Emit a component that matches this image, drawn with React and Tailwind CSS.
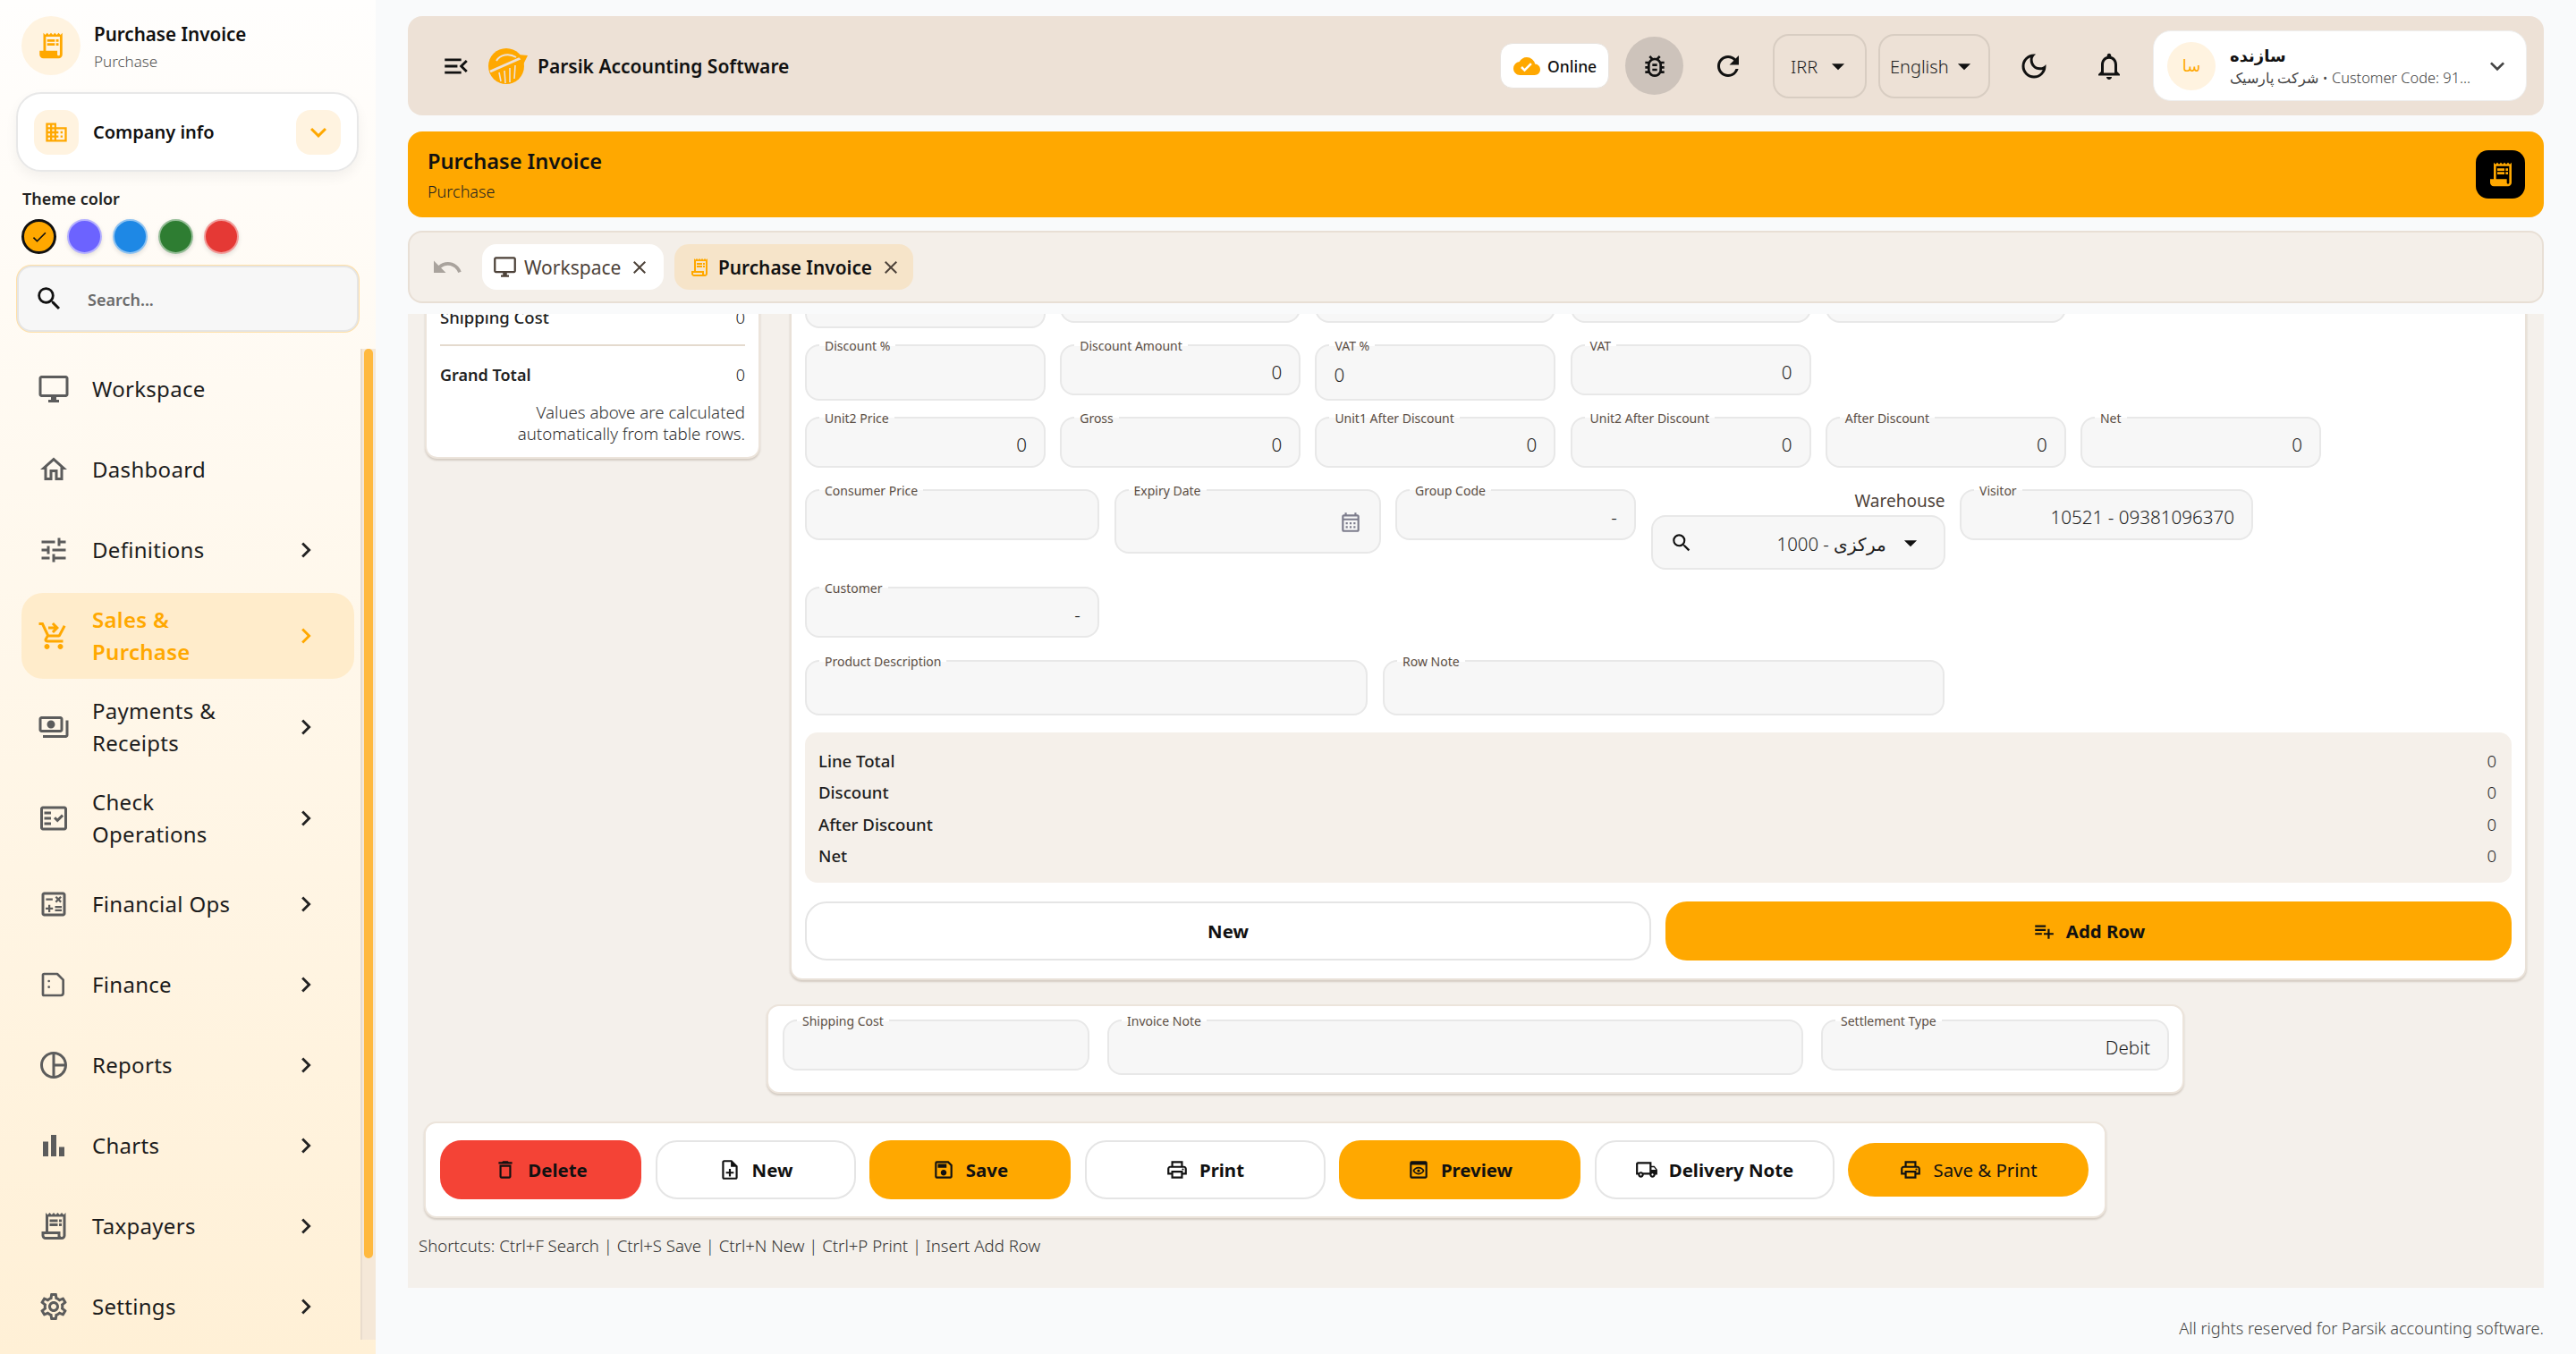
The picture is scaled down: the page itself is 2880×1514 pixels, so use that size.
import React from "react";
import {
  MdReceiptLong, MdBusiness, MdKeyboardArrowDown, MdCheck, MdSearch, MdOutlineDesktopWindows, MdOutlineHome,
  MdOutlineTune, MdOutlineShoppingCartCheckout, MdOutlinePayments, MdOutlineFactCheck, MdOutlineCalculate,
  MdOutlinePieChart, MdBarChart, MdOutlineReceiptLong, MdOutlineSettings, MdChevronRight, MdMenuOpen,
  MdCloudDone, MdOutlineBugReport, MdRefresh, MdOutlineDarkMode, MdOutlineNotifications, MdArrowDropDown,
  MdUndo, MdClose, MdOutlineCalendarMonth, MdOutlineDelete, MdOutlineNoteAdd, MdOutlineSave, MdOutlinePrint,
  MdOutlinePreview, MdOutlineLocalShipping, MdPlaylistAdd,
} from "react-icons/md";

const FinanceIcon = (p) => (
  <svg viewBox="0 0 24 24" fill="none" stroke="currentColor" strokeWidth="2" {...p}>
    <path d="M4 3h11l5 5v11a2 2 0 0 1-2 2H4a1 1 0 0 1-1-1V4a1 1 0 0 1 1-1z" strokeLinejoin="round" />
    <circle cx="8" cy="9" r="1" fill="currentColor" stroke="none" />
    <circle cx="8" cy="14" r="1" fill="currentColor" stroke="none" />
  </svg>
);

const Logo = () => (
  <svg viewBox="0 0 44 42" className="w-[44px] h-[42px] shrink-0">
    <circle cx="20" cy="21" r="20" fill="#ffa800" />
    <path d="M9 15C13 8 23 6 31 11" stroke="#ede1d6" strokeWidth="2" fill="none" />
    <path d="M2 27L36 12" stroke="#ede1d6" strokeWidth="3" fill="none" />
    <path d="M33 8l11 1-5 10-2-5-3-3z" fill="#ffa800" />
    <path d="M12 28l2 10M18 26l1 14M24 23l0 16M30 20l-1 15" stroke="#ede1d6" strokeWidth="1.6" />
  </svg>
);

const navItems = [
  { icon: MdOutlineDesktopWindows, label: "Workspace", noArrow: true },
  { icon: MdOutlineHome, label: "Dashboard", noArrow: true },
  { icon: MdOutlineTune, label: "Definitions" },
  { icon: MdOutlineShoppingCartCheckout, label: "Sales & Purchase", active: true },
  { icon: MdOutlinePayments, label: "Payments & Receipts" },
  { icon: MdOutlineFactCheck, label: "Check Operations" },
  { icon: MdOutlineCalculate, label: "Financial Ops" },
  { icon: FinanceIcon, label: "Finance", small: true },
  { icon: MdOutlinePieChart, label: "Reports" },
  { icon: MdBarChart, label: "Charts" },
  { icon: MdOutlineReceiptLong, label: "Taxpayers" },
  { icon: MdOutlineSettings, label: "Settings" },
];

function NavItem({ item }) {
  const Icon = item.icon;
  return (
    <div className={`flex items-center ml-[24px] w-[372px] rounded-[24px] pl-[18px] ${item.active ? "bg-[#ffeccb] text-[#ffa800] font-semibold" : "text-[#1c1c1c]"} ${item.label.length > 13 ? "h-[96px]" : "h-[84px]"}`}>
      <Icon className={`shrink-0 ${item.small ? "w-[32px] h-[32px] mx-[2px]" : "w-[36px] h-[36px]"} ${item.active ? "text-[#ffa800]" : "text-[#5c5c5c]"}`} />
      <div className="ml-[25px] w-[170px] text-[24px] leading-[36px] tracking-[0.3px]">{item.label}</div>
      {!item.noArrow && <MdChevronRight className="ml-[52px] w-[34px] h-[34px]" style={{ color: item.active ? "#ffa800" : "#222" }} />}
    </div>
  );
}

function Sidebar() {
  return (
    <aside className="w-[420px] h-full shrink-0 flex flex-col bg-[linear-gradient(180deg,#fffefd_0%,#fff0d6_100%)]">
      <div className="flex items-center ml-[24px] mt-[18px] h-[66px]">
        <div className="w-[66px] h-[66px] rounded-full bg-[#fff3e0] flex items-center justify-center">
          <MdReceiptLong className="w-[34px] h-[34px] text-[#ffa800]" />
        </div>
        <div className="ml-[15px] pt-[2px]">
          <div className="text-[20.6px] leading-[28px] font-semibold text-[#111]">Purchase Invoice</div>
          <div className="text-[17px] leading-[24px] mt-[5px] font-light text-[#555]">Purchase</div>
        </div>
      </div>
      <div className="ml-[18px] mt-[19px] w-[383px] h-[89px] rounded-[28px] bg-white border-2 border-[#e8e8e8] shadow-[0_6px_14px_rgba(0,0,0,0.05)] flex items-center px-[18px]">
        <div className="w-[50px] h-[50px] rounded-[16px] bg-[#fff3e0] flex items-center justify-center">
          <MdBusiness className="w-[28px] h-[28px] text-[#ffa800]" />
        </div>
        <div className="ml-[16px] pt-[1px] text-[20px] font-semibold text-[#111]">Company info</div>
        <div className="ml-auto w-[50px] h-[50px] rounded-[16px] bg-[#fff3e0] flex items-center justify-center">
          <MdKeyboardArrowDown className="w-[36px] h-[36px] text-[#ffa800]" />
        </div>
      </div>
      <div className="ml-[25px] mt-[17px] text-[18px] leading-[26px] font-semibold text-[#222]">Theme color</div>
      <div className="flex gap-[12px] ml-[24px] mt-[10px]">
        <div className="w-[39px] h-[39px] rounded-full bg-[#ffa800] border-[3px] border-[#111] flex items-center justify-center">
          <MdCheck className="w-[20px] h-[20px] text-[#111]" />
        </div>
        <div className="w-[39px] h-[39px] rounded-full bg-[#6c63ff] border-2 border-[#b5b1ff] shadow-[0_2px_5px_rgba(0,0,0,0.12)]" />
        <div className="w-[39px] h-[39px] rounded-full bg-[#1e88e5] border-2 border-[#8ec3f2] shadow-[0_2px_5px_rgba(0,0,0,0.12)]" />
        <div className="w-[39px] h-[39px] rounded-full bg-[#2e7d32] border-2 border-[#96be98] shadow-[0_2px_5px_rgba(0,0,0,0.12)]" />
        <div className="w-[39px] h-[39px] rounded-full bg-[#e53935] border-2 border-[#f29c9a] shadow-[0_2px_5px_rgba(0,0,0,0.12)]" />
      </div>
      <div className="ml-[19px] mt-[13px] w-[382px] h-[74px] rounded-[16px] bg-[#f7f7f7] border-2 border-[#e5e5e5] shadow-[0_0_0_1px_#ffe0a8] flex items-center pl-[17px]">
        <MdSearch className="w-[34px] h-[34px] text-[#111]" />
        <span className="ml-[26px] pt-[2px] text-[18px] font-semibold text-[#6b6b6b]">Search...</span>
      </div>
      <div className="flex-1 min-h-0 mt-[19px] flex overflow-hidden">
        <nav className="w-[403px] shrink-0 flex flex-col gap-[6px] pt-[3px]">
          {navItems.map((it) => <NavItem key={it.label} item={it} />)}
        </nav>
        <div className="w-[17px] h-[1108px] shrink-0 bg-[#f5e8d8] border-l-2 border-[#e9dccd] pl-[2px]">
          <div className="w-[10px] h-[1017px] rounded-full bg-[#ffb93f]" />
        </div>
      </div>
    </aside>
  );
}

function Field({ label, value, w, h = 57, align = "right", icon }) {
  return (
    <div style={{ width: w, height: h }} className="relative shrink-0 rounded-[16px] bg-[#f7f7f7] border-2 border-[#e8e8e8] flex items-center px-[19px] pt-[5px]">
      {label && <span className="absolute left-[14px] top-[-10px] px-[6px] text-[14px] leading-[19px] text-[#5b4e44] bg-[linear-gradient(#fff_50%,#f7f7f7_50%)] whitespace-nowrap">{label}</span>}
      <span className={`flex-1 text-[20.6px] font-light text-[#1d1d1d] ${align === "right" ? "text-right" : "text-left"}`}>{value}</span>
      {icon}
    </div>
  );
}

function Header() {
  return (
    <header className="h-[111px] mt-[18px] rounded-[16px] bg-[#ede1d6] flex items-center pl-[37px] pr-[19px]">
      <MdMenuOpen className="w-[34px] h-[34px] text-[#111]" />
      <div className="ml-[19px]"><Logo /></div>
      <div className="ml-[11px] pt-[2px] text-[21px] font-semibold text-[#111]">Parsik Accounting Software</div>
      <div className="ml-auto flex items-center">
        <div className="w-[122px] h-[51px] rounded-[14px] bg-white border border-[#e8e3de] flex items-center pl-[14px] gap-[8px]">
          <MdCloudDone className="w-[30px] h-[30px] text-[#ffa800]" />
          <span className="pt-[2px] text-[17.5px] font-medium text-[#111]">Online</span>
        </div>
        <div className="ml-[18px] w-[65px] h-[65px] rounded-full bg-[#cdc3bb] flex items-center justify-center">
          <MdOutlineBugReport className="w-[32px] h-[32px] text-[#111]" />
        </div>
        <MdRefresh className="ml-[32px] w-[36px] h-[36px] text-[#111]" />
        <div className="ml-[32px] w-[105px] h-[72px] rounded-[18px] border-2 border-[#d8cdc2] flex items-center pl-[18px] text-[20px] font-light text-[#222]">
          <span className="pt-[2px]">IRR</span><MdArrowDropDown className="ml-[6px] w-[34px] h-[34px] text-[#111]" />
        </div>
        <div className="ml-[13px] w-[125px] h-[72px] rounded-[18px] border-2 border-[#d8cdc2] flex items-center pl-[11px] text-[20px] font-light text-[#222]">
          <span className="pt-[2px]">English</span><MdArrowDropDown className="w-[34px] h-[34px] text-[#111]" />
        </div>
        <MdOutlineDarkMode className="ml-[31px] w-[36px] h-[36px] text-[#111]" />
        <MdOutlineNotifications className="ml-[48px] w-[36px] h-[36px] text-[#111]" />
        <div className="ml-[31px] w-[418px] h-[79px] rounded-[20px] bg-white border border-[#eee] flex items-center pl-[15px]">
          <div className="w-[54px] h-[54px] rounded-full bg-[#fff3e0] flex items-center justify-center text-[18px] text-[#ffa800]">سا</div>
          <div className="ml-[16px] w-[274px]">
            <div className="text-[18px] leading-[26px] font-semibold text-[#111] text-left" dir="ltr">سازنده</div>
            <div className="text-[16.4px] leading-[24px] font-light text-[#444] whitespace-nowrap overflow-hidden text-ellipsis">شرکت پارسیک • Customer Code: 91...</div>
          </div>
          <MdKeyboardArrowDown className="ml-[9px] w-[32px] h-[32px] text-[#444]" />
        </div>
      </div>
    </header>
  );
}

function Banner() {
  return (
    <div className="h-[96px] mt-[18px] rounded-[16px] bg-[#ffa800] flex items-center pl-[22px] pr-[21px]">
      <div className="pt-[1px]">
        <div className="text-[23.6px] leading-[32px] font-semibold text-[#111]">Purchase Invoice</div>
        <div className="text-[18px] leading-[26px] mt-[5px] font-light text-[#222]">Purchase</div>
      </div>
      <div className="ml-auto w-[55px] h-[54px] rounded-[14px] bg-black flex items-center justify-center">
        <MdReceiptLong className="w-[32px] h-[32px] text-[#ffa800]" />
      </div>
    </div>
  );
}

function Tabs() {
  return (
    <div className="h-[81px] mt-[15px] rounded-[16px] bg-[#f4efe9] border-2 border-[#e8dfd5] flex items-center pl-[24px]">
      <MdUndo className="w-[36px] h-[36px] text-[#a9a39d]" />
      <div className="ml-[21px] w-[203px] h-[51px] rounded-[16px] bg-white flex items-center pl-[12px]">
        <MdOutlineDesktopWindows className="w-[27px] h-[27px] text-[#4d4239]" />
        <span className="ml-[8px] pt-[2px] text-[21px] text-[#4d4239]">Workspace</span>
        <MdClose className="ml-[9px] w-[24px] h-[24px] text-[#4d4239]" />
      </div>
      <div className="ml-[12px] w-[267px] h-[51px] rounded-[16px] bg-[#f6e4c9] flex items-center pl-[16px]">
        <MdOutlineReceiptLong className="w-[24px] h-[24px] text-[#ffa800]" />
        <span className="ml-[9px] pt-[2px] text-[20.8px] font-semibold text-[#111]">Purchase Invoice</span>
        <MdClose className="ml-[9px] w-[24px] h-[24px] text-[#4d4239]" />
      </div>
    </div>
  );
}

function Btn({ icon: Icon, label, w, kind = "white", h = 66, weight = "font-bold", radius = "rounded-[24px]" }) {
  const k = kind === "orange" ? "bg-[#ffa800]" : kind === "red" ? "bg-[#f44336]" : "bg-white border-2 border-[#e5e5e5]";
  return (
    <div style={{ width: w, height: h }} className={`shrink-0 ${radius} ${k} flex items-center justify-center gap-[12px] text-[20.4px] ${weight} text-[#111]`}>
      {Icon && <Icon className="w-[26px] h-[26px] text-[#111]" />}
      <span>{label}</span>
    </div>
  );
}

function Form() {
  return (
    <section className="flex-1 min-w-0 bg-white border-2 border-[#e9e1d8] rounded-[14px] shadow-[0_2px_2px_rgba(120,100,80,0.25)] pt-[21px] pb-[20px] px-[15px]">
      <div className="flex gap-[16.2px] items-start">
        <Field w={269} h={63} />
        <Field w={269} />
        <Field w={269} />
        <Field w={269} />
        <Field w={269} />
      </div>
      <div className="flex gap-[16.2px] items-start mt-[18px]">
        <Field label="Discount %" w={269} h={63} />
        <Field label="Discount Amount" value="0" w={269} />
        <Field label="VAT %" value="0" w={269} h={63} align="left" />
        <Field label="VAT" value="0" w={269} />
      </div>
      <div className="flex gap-[16.2px] items-start mt-[18px]">
        <Field label="Unit2 Price" value="0" w={269} />
        <Field label="Gross" value="0" w={269} />
        <Field label="Unit1 After Discount" value="0" w={269} />
        <Field label="Unit2 After Discount" value="0" w={269} />
        <Field label="After Discount" value="0" w={269} />
        <Field label="Net" value="0" w={269} />
      </div>
      <div className="flex gap-[16.5px] items-start mt-[24px]">
        <Field label="Consumer Price" w={329} />
        <Field label="Expiry Date" w={298} h={72} icon={<MdOutlineCalendarMonth className="-mt-[4px] w-[26px] h-[26px] text-[#7c7c8c]" />} />
        <Field label="Group Code" value="-" w={269} />
        <div className="w-[329px] shrink-0">
          <div className="text-right text-[19px] leading-[28px] -mt-[1px] mb-[2px] text-[#4d4239]">Warehouse</div>
          <div className="h-[61px] rounded-[16px] bg-[#f7f7f7] border-2 border-[#e8e8e8] flex items-center pl-[19px] pr-[20px]">
            <MdSearch className="w-[26px] h-[26px] text-[#111]" />
            <span className="ml-[94px] pt-[4px] text-[20.4px] font-light text-[#1d1d1d] whitespace-nowrap">1000 - مرکزی</span>
            <MdArrowDropDown className="ml-auto w-[34px] h-[34px] text-[#111]" />
          </div>
        </div>
        <Field label="Visitor" value="10521 - 09381096370" w={328} />
      </div>
      <div className="mt-[19px]">
        <Field label="Customer" value="-" w={329} />
      </div>
      <div className="flex gap-[17px] mt-[25px]">
        <Field label="Product Description" w={629} h={62} />
        <Field label="Row Note" w={628} h={62} />
      </div>
      <div className="mt-[19px] h-[168px] rounded-[14px] bg-[#f5f0ea] pl-[15px] pr-[17px] pt-[14px] pb-[12px] flex flex-col justify-between text-[18.6px] font-medium text-[#1d1d1d]">
        {["Line Total", "Discount", "After Discount", "Net"].map((t) => (
          <div key={t} className="flex justify-between h-[36px] items-center">
            <span>{t}</span>
            <span className="font-light">0</span>
          </div>
        ))}
      </div>
      <div className="mt-[21px] flex gap-[16px]">
        <Btn label="New" w={946} />
        <Btn label="Add Row" icon={MdPlaylistAdd} w={946} kind="orange" />
      </div>
    </section>
  );
}

function Content() {
  return (
    <div className="h-[1089px] mt-[12px] bg-[#f4f0eb] overflow-hidden">
      <div className="-mt-[70px]">
        <div className="flex items-start gap-[33px] pl-[19px] pr-[19px]">
          <aside className="w-[375px] shrink-0 h-[232px] bg-white border-2 border-[#ece4db] rounded-[14px] shadow-[0_2px_2px_rgba(120,100,80,0.25)] pt-[59px] px-[15px]">
            <div className="flex justify-between text-[18.5px] leading-[26px] font-medium text-[#222]"><span>Shipping Cost</span><span className="font-light">0</span></div>
            <div className="h-[2px] bg-[#e4dace] mt-[17px]" />
            <div className="flex justify-between text-[18px] leading-[26px] font-semibold text-[#222] mt-[19px]"><span>Grand Total</span><span className="font-light">0</span></div>
            <p className="mt-[17px] text-right text-[18.7px] leading-[24px] font-light text-[#333] whitespace-nowrap">Values above are calculated<br />automatically from table rows.</p>
          </aside>
          <Form />
        </div>
        <div className="ml-[401px] w-[1585px] h-[100px] mt-[27px] bg-white border-2 border-[#ece4db] rounded-[14px] shadow-[0_2px_2px_rgba(120,100,80,0.25)] flex items-start gap-[20px] pl-[16px] pt-[15px]">
          <Field label="Shipping Cost" w={343} />
          <Field label="Invoice Note" w={778} h={62} />
          <Field label="Settlement Type" value="Debit" w={389} />
        </div>
        <div className="ml-[18px] w-[1881px] h-[108px] mt-[31px] bg-white border-2 border-[#ece4db] rounded-[14px] shadow-[0_2px_2px_rgba(120,100,80,0.25)] flex items-center gap-[15.5px] pl-[16px]">
          <Btn icon={MdOutlineDelete} label="Delete" w={225} kind="red" />
          <Btn icon={MdOutlineNoteAdd} label="New" w={224} />
          <Btn icon={MdOutlineSave} label="Save" w={225} kind="orange" />
          <Btn icon={MdOutlinePrint} label="Print" w={269} />
          <Btn icon={MdOutlinePreview} label="Preview" w={270} kind="orange" />
          <Btn icon={MdOutlineLocalShipping} label="Delivery Note" w={268} />
          <Btn icon={MdOutlinePrint} label="Save & Print" w={269} kind="orange" h={60} weight="font-normal" radius="rounded-[30px]" />
        </div>
        <div className="ml-[12px] mt-[19px] text-[18.6px] leading-[24px] font-light text-[#333]">Shortcuts: Ctrl+F Search | Ctrl+S Save | Ctrl+N New | Ctrl+P Print | Insert Add Row</div>
      </div>
    </div>
  );
}

export default function App() {
  return (
    <div className="w-screen h-screen overflow-hidden flex bg-[#f9fafb] font-['Noto_Sans','DejaVu_Sans',sans-serif]">
      <Sidebar />
      <main className="flex-1 min-w-0 flex flex-col pl-[36px] pr-[36px]">
        <Header />
        <Banner />
        <Tabs />
        <Content />
        <div className="mt-[33px] text-right text-[18.2px] leading-[24px] font-light text-[#444]">All rights reserved for Parsik accounting software.</div>
      </main>
    </div>
  );
}
